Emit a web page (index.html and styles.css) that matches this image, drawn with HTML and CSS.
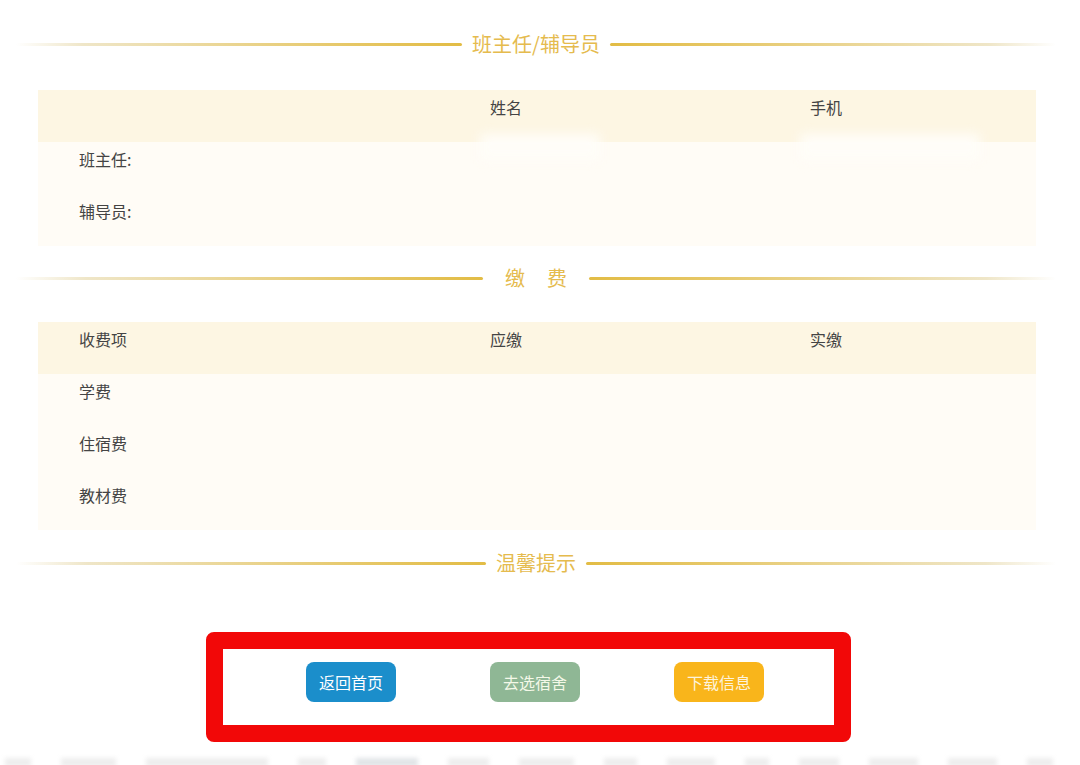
FILE: index.html
```html
<!DOCTYPE html>
<html lang="zh-CN">
<head>
    <meta charset="UTF-8">
    <meta name="viewport" content="width=device-width, initial-scale=1.0">
    <title>报到信息</title>
    <link rel="stylesheet" href="styles.css">
</head>
<body>
    <div class="page">
        <div class="divider">
            <span class="line left"></span>
            <h2 class="title">班主任/辅导员</h2>
            <span class="line right"></span>
        </div>
        <div class="table teacher">
            <div class="row head">
                <div class="cell"></div>
                <div class="cell">姓名</div>
                <div class="cell">手机</div>
            </div>
            <div class="row">
                <div class="cell">班主任:</div>
                <div class="cell"><span class="smudge wide"></span></div>
                <div class="cell"><span class="smudge"></span></div>
            </div>
            <div class="row">
                <div class="cell">辅导员:</div>
                <div class="cell"></div>
                <div class="cell"></div>
            </div>
        </div>

        <div class="divider fee">
            <span class="line left"></span>
            <h2 class="title spaced">缴费</h2>
            <span class="line right"></span>
        </div>
        <div class="table payment">
            <div class="row head">
                <div class="cell">收费项</div>
                <div class="cell">应缴</div>
                <div class="cell">实缴</div>
            </div>
            <div class="row">
                <div class="cell">学费</div>
                <div class="cell"></div>
                <div class="cell"></div>
            </div>
            <div class="row">
                <div class="cell">住宿费</div>
                <div class="cell"></div>
                <div class="cell"></div>
            </div>
            <div class="row">
                <div class="cell">教材费</div>
                <div class="cell"></div>
                <div class="cell"></div>
            </div>
        </div>

        <div class="divider tips">
            <span class="line left"></span>
            <h2 class="title">温馨提示</h2>
            <span class="line right"></span>
        </div>

        <div class="actions">
            <button class="btn home">返回首页</button>
            <button class="btn dorm">去选宿舍</button>
            <button class="btn download">下载信息</button>
        </div>

        <div class="dock">
            <span class="blob" style="width:26px"></span>
            <span class="blob" style="width:55px"></span>
            <span class="blob" style="width:122px"></span>
            <span class="blob" style="width:28px"></span>
            <span class="blob dark" style="width:62px"></span>
            <span class="blob" style="width:41px"></span>
            <span class="blob" style="width:55px"></span>
            <span class="blob" style="width:33px"></span>
            <span class="blob" style="width:48px"></span>
            <span class="blob" style="width:24px"></span>
            <span class="blob" style="width:40px"></span>
            <span class="blob" style="width:49px"></span>
            <span class="blob" style="width:49px"></span>
            <span class="blob" style="width:26px"></span>
        </div>
    </div>
</body>
</html>
```

FILE: styles.css
```css
* {
    box-sizing: border-box;
}
body {
    margin: 0;
    background-color: #fff;
    font-family: "Noto Sans CJK SC", "Noto Sans", sans-serif;
    color: #3a3a3a;
}
.page {
    width: 1080px;
    height: 765px;
    padding-top: 24px;
    overflow: hidden;
}

/* section dividers */
.divider {
    display: flex;
    align-items: center;
    height: 40px;
    padding: 0 24px 0 16px;
}
.divider.fee {
    margin-top: 12px;
}
.divider.tips {
    margin-top: 13px;
}
.line {
    flex: 1;
    height: 3px;
    border-radius: 2px;
}
.line.left {
    background: linear-gradient(to right, rgba(235, 225, 200, 0), #efe6c8 15%, #e6c766 75%, #e2bc45);
}
.line.right {
    background: linear-gradient(to left, rgba(235, 225, 200, 0), #efe6c8 15%, #e6c766 75%, #e2bc45);
}
.title {
    margin: 0 10px;
    font-size: 20px;
    font-weight: normal;
    line-height: 40px;
    color: #e5bb4e;
}
.title.spaced {
    letter-spacing: 22px;
    padding-left: 22px;
    margin: 0 0;
}

/* info tables */
.table {
    margin: 26px 44px 0 38px;
    background-color: #fffcf6;
    font-size: 16px;
    color: #444;
}
.table.payment {
    margin-top: 24px;
}
.row {
    display: grid;
    grid-template-columns: 452px 320px 1fr;
    height: 52px;
}
.row.head {
    background-color: #fdf6e3;
}
.cell {
    position: relative;
    padding-top: 7px;
    line-height: 20px;
}
.cell:first-child {
    padding-left: 41px;
}
.smudge {
    position: absolute;
    top: -8px;
    left: -10px;
    width: 180px;
    height: 26px;
    background-color: #fffdf8;
    filter: blur(6px);
}
.smudge.wide {
    width: 120px;
}

/* buttons in the red frame */
.actions {
    display: flex;
    justify-content: center;
    gap: 94px;
    width: 645px;
    height: 110px;
    margin: 49px 0 0 206px;
    padding: 13px 0 0 13px;
    border: 17px solid #f20808;
    border-radius: 8px;
    background-color: #fff;
}
.btn {
    width: 90px;
    height: 40px;
    border: none;
    border-radius: 8px;
    color: #fff;
    font-family: inherit;
    font-size: 16px;
    cursor: pointer;
}
.btn.home {
    background-color: #1b8ecb;
}
.btn.dorm {
    background-color: #8fb795;
    color: #f4f8e8;
}
.btn.download {
    background-color: #f9b51b;
    color: #fdf3dc;
}

/* blurred bar at the bottom */
.dock {
    display: flex;
    gap: 30px;
    margin-top: 14px;
    padding-left: 5px;
    height: 10px;
    filter: blur(2px);
}
.blob {
    height: 9px;
    margin-top: 2px;
    background-color: #eeeeee;
}
.blob.dark {
    background-color: #e2e5e8;
}
```
